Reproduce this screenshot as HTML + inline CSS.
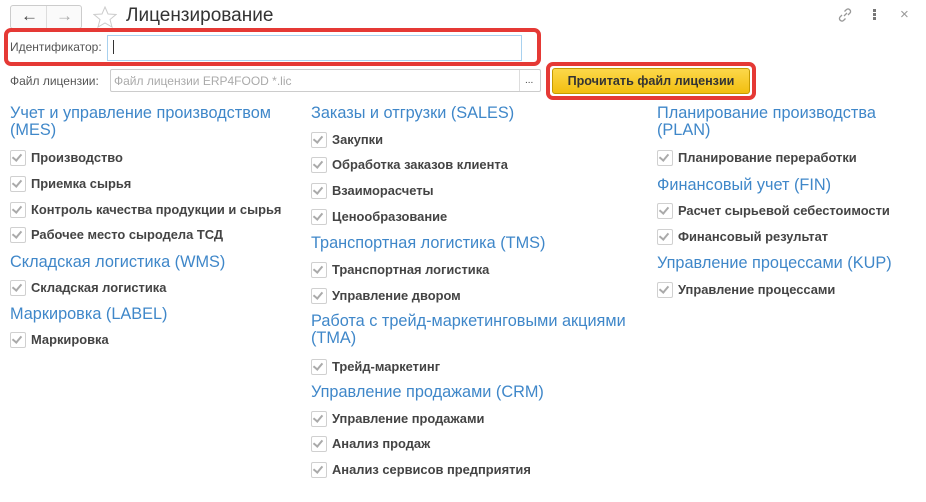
<!DOCTYPE html>
<html><head><meta charset="utf-8"><style>
*{margin:0;padding:0;box-sizing:border-box}
body{width:926px;height:502px;background:#fff;font-family:"Liberation Sans",Arial,sans-serif;position:relative;overflow:hidden;color:#444}
.a{position:absolute;white-space:nowrap}
.h{position:absolute;white-space:nowrap;color:#3f87c9;font-size:16.3px;line-height:17px}
.i{position:absolute;white-space:nowrap;font-size:12.9px;font-weight:bold;color:#444;line-height:16px;padding-left:21px}
.i:before{content:"";position:absolute;left:0;top:0;width:14px;height:14px;border:1px solid #d0d0d0;border-radius:2px;background:#fff}
.i:after{content:"";position:absolute;left:4px;top:2px;width:4px;height:7px;border:solid #aaa;border-width:0 2px 2px 0;transform:rotate(40deg)}
</style></head><body>
<div class="a" style="left:10px;top:5px;width:72px;height:24px;border:1px solid #ccc;border-radius:3px;background:#fafafa"></div>
<div class="a" style="left:46px;top:6px;width:1px;height:22px;background:#ddd"></div>
<div class="a" style="left:21px;top:6px;font-size:17px;color:#444;font-weight:bold">&#8592;</div>
<div class="a" style="left:56px;top:6px;font-size:17px;color:#aaa;font-weight:bold">&#8594;</div>
<svg class="a" style="left:93px;top:6px" width="24" height="22" viewBox="0 0 24 22"><polygon points="12,1 15,8 23,8.5 17,13.5 19,21 12,17 5,21 7,13.5 1,8.5 9,8" fill="none" stroke="#ccc" stroke-width="1"/></svg>
<div class="a" style="left:126px;top:5px;font-size:19px;color:#333">Лицензирование</div>
<svg class="a" style="left:837px;top:7px" width="16" height="16" viewBox="0 0 16 16"><path d="M7 9l3-3M5 8l-2 2a2.5 2.5 0 0 0 3.5 3.5l2-2M11 8l2-2a2.5 2.5 0 0 0-3.5-3.5l-2 2" fill="none" stroke="#999" stroke-width="1.3"/></svg>
<div class="a" style="left:873px;top:9px;width:3px;height:3px;background:#777;box-shadow:0 4px #777,0 8px #777"></div>
<div class="a" style="left:900px;top:6px;font-size:15px;color:#999">×</div>

<div class="a" style="left:4px;top:28px;width:537px;height:38px;border:4px solid #e53935;border-radius:7px"></div>
<div class="a" style="left:10px;top:40px;font-size:12px;color:#555">Идентификатор:</div>
<div class="a" style="left:107px;top:35px;width:415px;height:26px;border:1px solid #a8d1ef;background:#fff"></div>
<div class="a" style="left:113px;top:40px;width:1px;height:14px;background:#333"></div>

<div class="a" style="left:10px;top:74px;font-size:12px;color:#555">Файл лицензии:</div>
<div class="a" style="left:110px;top:69px;width:431px;height:23px;border:1px solid #ccc;border-radius:2px"></div>
<div class="a" style="left:519px;top:70px;width:1px;height:21px;background:#ddd"></div>
<div class="a" style="left:114px;top:74px;font-size:12px;color:#aaa">Файл лицензии ERP4FOOD *.lic</div>
<div class="a" style="left:525px;top:75px;font-size:10px;color:#444">...</div>

<div class="a" style="left:546px;top:62px;width:210px;height:38px;border:4px solid #e53935;border-radius:7px"></div>
<div class="a" style="left:552px;top:68px;width:198px;height:26px;border:1px solid #c59b00;border-radius:3px;background:linear-gradient(#fcd84a,#f2be10);font-size:12.6px;font-weight:bold;color:#333;text-align:center;line-height:24px">Прочитать файл лицензии</div>

<div class="h" style="left:10px;top:105px">Учет и управление производством<br>(MES)</div>
<div class="i" style="left:10px;top:150px">Производство</div>
<div class="i" style="left:10px;top:176px">Приемка сырья</div>
<div class="i" style="left:10px;top:202px">Контроль качества продукции и сырья</div>
<div class="i" style="left:10px;top:227px">Рабочее место сыродела ТСД</div>
<div class="h" style="left:10px;top:254px">Складская логистика (WMS)</div>
<div class="i" style="left:10px;top:280px">Складская логистика</div>
<div class="h" style="left:10px;top:306px">Маркировка (LABEL)</div>
<div class="i" style="left:10px;top:332px">Маркировка</div>

<div class="h" style="left:311px;top:105px">Заказы и отгрузки (SALES)</div>
<div class="i" style="left:311px;top:132px">Закупки</div>
<div class="i" style="left:311px;top:157px">Обработка заказов клиента</div>
<div class="i" style="left:311px;top:183px">Взаиморасчеты</div>
<div class="i" style="left:311px;top:209px">Ценообразование</div>
<div class="h" style="left:311px;top:235px">Транспортная логистика (TMS)</div>
<div class="i" style="left:311px;top:262px">Транспортная логистика</div>
<div class="i" style="left:311px;top:288px">Управление двором</div>
<div class="h" style="left:311px;top:313px">Работа с трейд-маркетинговыми акциями<br>(TMA)</div>
<div class="i" style="left:311px;top:359px">Трейд-маркетинг</div>
<div class="h" style="left:311px;top:384px">Управление продажами (CRM)</div>
<div class="i" style="left:311px;top:411px">Управление продажами</div>
<div class="i" style="left:311px;top:436px">Анализ продаж</div>
<div class="i" style="left:311px;top:462px">Анализ сервисов предприятия</div>

<div class="h" style="left:657px;top:105px">Планирование производства<br>(PLAN)</div>
<div class="i" style="left:657px;top:150px">Планирование переработки</div>
<div class="h" style="left:657px;top:177px">Финансовый учет (FIN)</div>
<div class="i" style="left:657px;top:203px">Расчет сырьевой себестоимости</div>
<div class="i" style="left:657px;top:229px">Финансовый результат</div>
<div class="h" style="left:657px;top:255px">Управление процессами (KUP)</div>
<div class="i" style="left:657px;top:282px">Управление процессами</div>
</body></html>
